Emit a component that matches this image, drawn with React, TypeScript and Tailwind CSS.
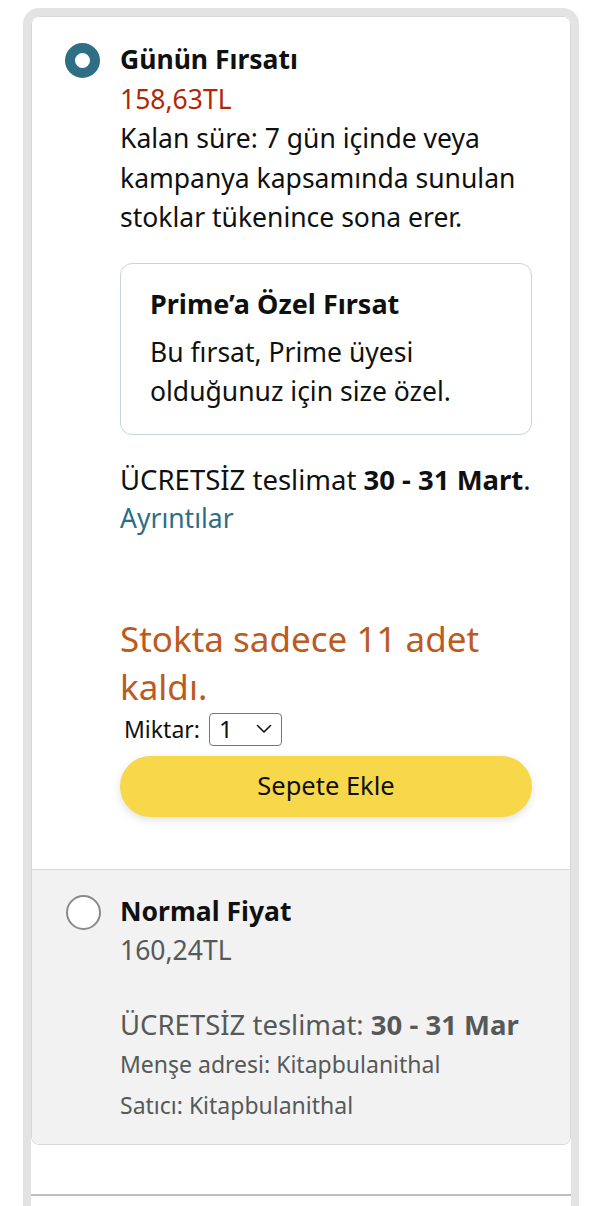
import React from "react";

const font = { fontFamily: '"Noto Sans", "Open Sans", sans-serif' };

function Chevron() {
  return (
    <svg width="16" height="10" viewBox="0 0 16 10" fill="none">
      <path d="M1.5 1.5 L8 8 L14.5 1.5" stroke="#111" strokeWidth="1.6" strokeLinecap="round" strokeLinejoin="round" />
    </svg>
  );
}

export default function App() {
  return (
    <div className="bg-white min-h-[1206px] w-[596px] overflow-hidden" style={font}>
      <div className="ml-[23px] mt-[8px] w-[556px] h-[1198px] border-[8px] border-b-0 border-[#e3e3e3] rounded-t-[16px] bg-white">
        <div className="border border-[#d5d9d9] rounded-[8px]">
          {/* Deal section */}
          <div className="flex pt-[23px] pb-[52px] bg-white rounded-t-[8px]">
            <div className="w-[88px] shrink-0 flex justify-start pl-[33px] pt-[3px]">
              <div className="w-[35px] h-[35px] rounded-full border-[10px] border-[#2f6f85] bg-white" />
            </div>
            <div className="w-[412px] text-[#0f1111] text-[26.5px] leading-[39.5px]">
              <div className="font-bold">Günün Fırsatı</div>
              <div className="text-[#b12704]">158,63TL</div>
              <div>Kalan süre: 7 gün içinde veya kampanya kapsamında sunulan stoklar tükenince sona erer.</div>
              <div className="mt-[25px] border border-[#c3d4df] rounded-[12px] pl-[29px] pr-[40px] pt-[20px] pb-[23px]">
                <div className="font-bold text-[27px] leading-[40px]">Prime’a Özel Fırsat</div>
                <div className="mt-[9px] text-[26.5px] leading-[39px]">Bu fırsat, Prime üyesi olduğunuz için size özel.</div>
              </div>
              <div className="mt-[25px] text-[27.5px]">
                ÜCRETSİZ teslimat <span className="font-bold">30 - 31 Mart</span>.
              </div>
              <div className="text-[#2b6f86]">Ayrıntılar</div>
              <div className="mt-[76px] text-[35px] leading-[48px] text-[#bc5a20]">Stokta sadece 11 adet kaldı.</div>
              <div className="mt-[1px] flex items-center h-[35px] pl-[4px]">
                <span className="text-[23px] leading-[30px]">Miktar:</span>
                <div className="ml-[9px] w-[73px] h-[33px] border border-[#767676] rounded-[4px] flex items-center justify-between pl-[9px] pr-[9px]">
                  <span className="text-[24px] leading-[30px]">1</span>
                  <Chevron />
                </div>
              </div>
              <div className="mt-[9px] h-[61px] rounded-full bg-[#f7d84b] shadow-[0_3px_8px_rgba(0,0,0,0.12)] flex items-center justify-center text-[25.5px]">
                Sepete Ekle
              </div>
            </div>
          </div>
          {/* Normal price section */}
          <div className="flex border-t border-[#d5d9d9] bg-[#f2f2f2] rounded-b-[8px] pt-[22px] pb-[18px]">
            <div className="w-[88px] shrink-0 flex justify-start pl-[34px] pt-[3px]">
              <div className="w-[35px] h-[35px] rounded-full border-2 border-[#8a8a8a] bg-white" />
            </div>
            <div className="w-[412px] text-[26.5px] leading-[39.5px] text-[#565959]">
              <div className="font-bold text-[#0f1111]">Normal Fiyat</div>
              <div>160,24TL</div>
              <div className="mt-[34px] text-[27.5px]">
                ÜCRETSİZ teslimat: <span className="font-bold">30 - 31 Mar</span>
              </div>
              <div className="text-[23px] leading-[41px]">Menşe adresi: Kitapbulanithal</div>
              <div className="text-[23px] leading-[41px]">Satıcı: Kitapbulanithal</div>
            </div>
          </div>
        </div>
        <div className="mt-[49px] border-t-2 border-[#bbbfbf]" />
      </div>
    </div>
  );
}
